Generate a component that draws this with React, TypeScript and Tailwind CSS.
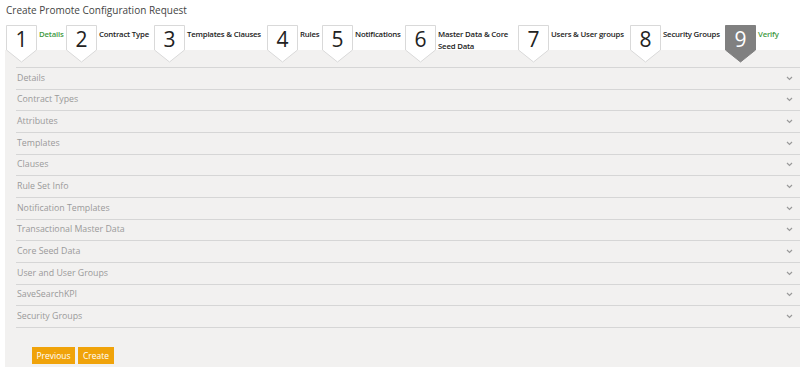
import React from "react";

const steps: { n: string; label: React.ReactNode; active?: boolean; green?: boolean; w: number }[] = [
  { n: "1", label: "Details", green: true, w: 60 },
  { n: "2", label: "Contract Type", w: 88 },
  { n: "3", label: "Templates & Clauses", w: 113 },
  { n: "4", label: "Rules", w: 55 },
  { n: "5", label: "Notifications", w: 83 },
  { n: "6", label: (<>Master Data &amp; Core<br />Seed Data</>), w: 113 },
  { n: "7", label: "Users & User groups", w: 112 },
  { n: "8", label: "Security Groups", w: 95 },
  { n: "9", label: "Verify", active: true, green: true, w: 60 },
];

const rows = [
  "Details",
  "Contract Types",
  "Attributes",
  "Templates",
  "Clauses",
  "Rule Set Info",
  "Notification Templates",
  "Transactional Master Data",
  "Core Seed Data",
  "User and User Groups",
  "SaveSearchKPI",
  "Security Groups",
];

function Box({ n, active }: { n: string; active?: boolean }) {
  return (
    <div className="relative w-[31px] h-[38px] shrink-0">
      <svg width="31" height="38" viewBox="0 0 31 38" className="absolute inset-0">
        <polygon
          points="0.5,0.5 30.5,0.5 30.5,25 15.5,37 0.5,25"
          fill={active ? "#808080" : "#ffffff"}
          stroke={active ? "#808080" : "#d9d9d9"}
        />
      </svg>
      <div
        className={`relative text-center text-[21px] leading-[26px] pt-[1px] ${active ? "text-white" : "text-[#222]"}`}
      >
        {n}
      </div>
    </div>
  );
}

function Chevron() {
  return (
    <svg width="7" height="5" viewBox="0 0 7 5">
      <polyline points="1,1 3.5,3.5 6,1" fill="none" stroke="#9a9a9a" strokeWidth="1.2" />
    </svg>
  );
}

export default function App() {
  return (
    <div
      className="w-[800px] h-[367px] bg-white overflow-hidden"
      style={{ fontFamily: '"Open Sans", "Noto Sans", sans-serif' }}
    >
      <div className="pl-[6px] pt-[3px] h-[25px] text-[10px] text-[#444] leading-[14px]">
        Create Promote Configuration Request
      </div>
      <div className="relative z-10 flex items-start pl-[6px] h-[38px] -mb-[13px]">
        {steps.map((s) => (
          <div key={s.n} className="flex items-start shrink-0" style={{ width: s.w }}>
            <Box n={s.n} active={s.active} />
            <div
              className={`ml-[2px] mt-[3px] text-[7.8px] leading-[12px] font-semibold tracking-[-0.2px] whitespace-nowrap ${s.green ? "text-[#3f9a3f]" : "text-[#222]"}`}
            >
              {s.label}
            </div>
          </div>
        ))}
      </div>
      <div className="ml-[5px] h-[330px] bg-[#f2f1f0] pl-[11px] pt-[17px]">
        <div className="border-t border-[#d6d6d6]">
          {rows.map((r) => (
            <div
              key={r}
              className="h-[21.67px] border-b border-[#d6d6d6] flex items-center justify-between pl-[1px] pr-[7px] text-[8.8px] text-[#9a9a9a]"
            >
              <span>{r}</span>
              <Chevron />
            </div>
          ))}
        </div>
        <div className="flex gap-[3px] pl-[16px] pt-[19px]">
          <button className="w-[43px] h-[17px] bg-[#f0a30a] text-white text-[8.5px] leading-[17px] text-center">
            Previous
          </button>
          <button className="w-[36px] h-[17px] bg-[#f0a30a] text-white text-[8.5px] leading-[17px] text-center">
            Create
          </button>
        </div>
      </div>
    </div>
  );
}
